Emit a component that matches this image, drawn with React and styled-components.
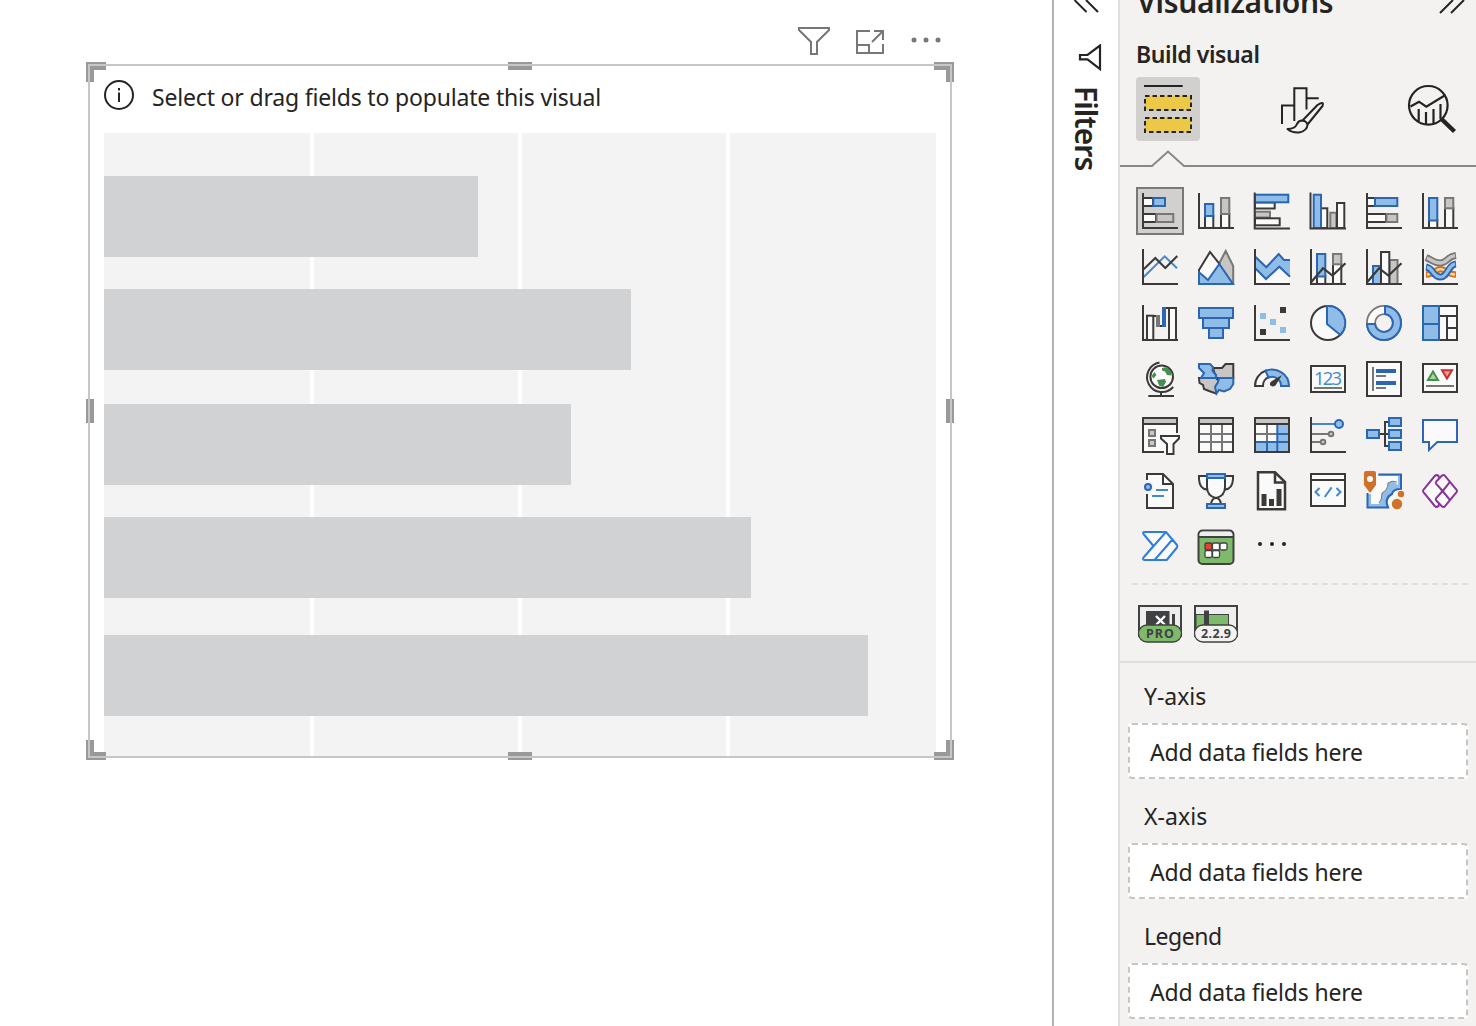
import React from 'react';
import styled, { createGlobalStyle } from 'styled-components';

const INK = '#252423';
const DARK = '#3b3a39';
const GRAY = '#797775';
const LGRAY = '#c8c6c4';
const BLUE = '#2b66b1';
const SKY = '#90bce8';
const MID = '#4389cb';
const PAPER = '#fafafa';

const GlobalStyle = createGlobalStyle`
  body { margin: 0; background: #fff; }
  * { box-sizing: border-box; }
  svg { display: block; flex: none; }
`;

const Shell = styled.div`
  display: flex;
  width: 1476px;
  height: 1026px;
  overflow: hidden;
  background: #fff;
  color: ${INK};
  font-family: "Noto Sans", "Open Sans", sans-serif;
`;

const Canvas = styled.main`
  width: 1052px;
  padding: 20px 100px 0 86px;
`;

const VisualHeader = styled.div`
  display: flex;
  justify-content: flex-end;
  gap: 16px;
  height: 42px;
  padding-right: 6px;
`;

const Visual = styled.section`
  position: relative;
  width: 868px;
  height: 698px;
  padding: 4px 18px;
`;

const SelectionFrame = styled.div`
  position: absolute;
  inset: 2px;
  border: 2px solid #c6c6c6;
  pointer-events: none;
`;

const Handle = styled.span`
  position: absolute;
  background: #999;
  ${(p) => p.$css}
`;

const Hint = styled.div`
  display: flex;
  align-items: center;
  gap: 18px;
  height: 67px;
  padding-bottom: 9px;
  font-size: 23px;
  letter-spacing: -0.18px;
  white-space: nowrap;

  span { padding-top: 4px; }
`;

const Plot = styled.div`
  display: flex;
  flex-direction: column;
  width: 832px;
  height: 623px;
  padding-top: 43px;
  background:
    linear-gradient(#fff, #fff) 206px 0 / 4px 100% no-repeat,
    linear-gradient(#fff, #fff) 414px 0 / 4px 100% no-repeat,
    linear-gradient(#fff, #fff) 622px 0 / 4px 100% no-repeat,
    #f3f3f3;
`;

const Bar = styled.div`
  width: ${(p) => p.$w}px;
  height: 81px;
  margin-bottom: ${(p) => p.$gap}px;
  flex: none;
  background: #d1d2d4;
`;

const FiltersPane = styled.aside`
  display: flex;
  flex-direction: column;
  align-items: center;
  width: 66px;
  border-left: 2px solid #b3b2ad;
`;

const FiltersTitle = styled.div`
  writing-mode: vertical-rl;
  margin-top: 14px;
  font-size: 30px;
  font-weight: 600;
  line-height: 40px;
  letter-spacing: -0.9px;
`;

const VizPane = styled.aside`
  width: 358px;
  border-left: 2px solid #e1dfdd;
  background: #f3f2f1;
`;

const PaneHeader = styled.header`
  display: flex;
  justify-content: space-between;
  height: 32px;
  padding: 0 10px 0 17px;
`;

const PaneTitle = styled.h1`
  margin: -18px 0 0;
  font-size: 30px;
  font-weight: 600;
  line-height: 40px;
  letter-spacing: -0.35px;
`;

const SubTitle = styled.h2`
  height: 45px;
  margin: 0;
  padding-left: 16px;
  font-size: 23px;
  font-weight: 600;
  line-height: 45px;
  letter-spacing: -0.4px;
`;

const Tabs = styled.nav`
  display: flex;
  justify-content: space-between;
  padding: 0 12px 0 16px;
`;

const Tab = styled.button`
  width: 64px;
  height: 64px;
  padding: 0;
  border: 0;
  border-radius: 4px;
  background: ${(p) => (p.$active ? '#d2d0ce' : 'transparent')};
`;

const Gallery = styled.div`
  display: grid;
  grid-template-columns: repeat(6, 48px);
  grid-auto-rows: 48px;
  gap: 8px;
  padding: 20px 0 12px 16px;
`;

const Tile = styled.button`
  width: 48px;
  height: 48px;
  padding: 0;
  border: 0;
  background: ${(p) => (p.$active ? '#d2d0ce' : 'transparent')};
  box-shadow: ${(p) => (p.$active ? 'inset 0 0 0 2px #7a7876' : 'none')};
`;

const DashRule = styled.div`
  height: 2px;
  margin: 0 8px 0 12px;
  background: repeating-linear-gradient(90deg, #e1dfdd 0 6px, transparent 6px 10px);
`;

const CustomRow = styled.div`
  display: flex;
  gap: 8px;
  height: 78px;
  padding: 15px 0 0 16px;
  border-bottom: 2px solid #e1dfdd;
`;

const Well = styled.div`
  height: 120px;
  padding: 0 8px;
`;

const WellLabel = styled.div`
  height: 60px;
  padding-left: 16px;
  font-size: 23px;
  line-height: 67px;
  letter-spacing: ${(p) => p.$spacing}px;
`;

const DropZone = styled.div`
  width: 340px;
  height: 56px;
  padding-left: 20px;
  border: 2px dashed #c8c6c4;
  border-radius: 4px;
  background: #fff;
  font-size: 23px;
  line-height: 55px;
  letter-spacing: -0.17px;
`;

const R = ({ a, s = DARK, f = PAPER, w = 2 }) => (
  <rect x={a[0]} y={a[1]} width={a[2] - a[0]} height={a[3] - a[1]} stroke={s} fill={f} strokeWidth={w} />
);
const P = ({ d, s = DARK, f = 'none', w = 2, ...rest }) => (
  <path d={d} stroke={s} fill={f} strokeWidth={w} {...rest} />
);
const Axis = () => <P d="M7 6V41H42" />;
const Blue = ({ a }) => <R a={a} s={BLUE} f={SKY} />;
const Gray = ({ a }) => <R a={a} s={GRAY} f={LGRAY} />;

const Trend = () => <P d="M7.3 39L19 25.2L28.5 32.6L41.5 20.3" w={2.2} />;

const icons = [
  ['Stacked bar chart', <><R a={[7, 11, 17, 19]} /><Blue a={[17.3, 11, 29, 19]} /><R a={[7, 27, 20, 35]} /><Gray a={[20.5, 27, 37.3, 35]} /><Axis /></>],
  ['Stacked column chart', <><R a={[13, 29, 21.3, 41]} /><Blue a={[13, 17, 21.3, 29]} /><R a={[29, 27, 37.3, 41]} /><Gray a={[29, 11, 37.3, 27]} /><Axis /></>],
  ['Clustered bar chart', <><R a={[7, 15.5, 26.7, 21.5]} /><Blue a={[7, 7.7, 40.3, 15.3]} /><Gray a={[7, 24.7, 22, 30.5]} /><R a={[7, 31.3, 31.7, 38.3]} /><P d="M6.7 5.5V41.5H42" /></>],
  ['Clustered column chart', <><R a={[17, 21.3, 23.3, 41]} /><Blue a={[9.7, 7.7, 17, 41]} /><Gray a={[26.3, 25.7, 32.3, 41]} /><R a={[33, 16, 40.3, 41]} /><P d="M6.5 5.5V41.5H42" /></>],
  ['100% stacked bar chart', <><R a={[7, 11, 15, 19]} /><Blue a={[15, 11, 37.3, 19]} /><R a={[7, 27, 26, 35]} /><Gray a={[26.5, 27, 37.3, 35]} /><Axis /></>],
  ['100% stacked column chart', <><R a={[13, 33, 21.3, 41]} /><Blue a={[13, 11, 21.3, 33.5]} /><R a={[29, 21, 37.3, 41]} /><Gray a={[29, 11, 37.3, 21.3]} /><Axis /></>],

  ['Line chart', <><P d="M7.7 34L28.7 13.3L41 25.3" s={MID} /><P d="M7.7 26.3L19.3 15L29.3 25L41.3 13" /><Axis /></>],
  ['Area chart', <><P d="M27.3 20.3L33.7 8L41.2 23V41H27Z" s={GRAY} f={LGRAY} /><P d="M7 41V27L18 9L27.5 21L20 41Z" f={PAPER} /><P d="M7 29.3L16 37L27.3 21L41 41H7Z" s={BLUE} f={SKY} /></>],
  ['Stacked area chart', <><path d="M7.3 26L18 36L31.3 24L42 33.7V41H7Z" fill={PAPER} /><path d="M7.3 13.7L18.3 24.3L30.7 11L36 17H42V33.7L31.3 23.7L18 36L7.3 25.3Z" fill={SKY} /><P d="M7.3 13.7L18.3 24.3L30.7 11L36 17H42M42 33.7L31.3 23.7L18 36L7.3 25.3" s={BLUE} /><Axis /></>],
  ['Line and stacked column chart', <><R a={[13, 33, 21.3, 41]} /><Blue a={[13, 11, 21.3, 33.5]} /><R a={[29, 21, 37.3, 41]} /><Gray a={[29, 11, 37.3, 21.3]} /><Axis /><Trend /></>],
  ['Line and clustered column chart', <><Blue a={[13, 23, 21, 41]} /><Gray a={[29.5, 17, 37.5, 41]} /><R a={[21, 9, 29.3, 41]} /><Axis /><Trend /></>],
  ['Ribbon chart', <>
    <P d="M10 31.5C18 31.5 20 26 24.5 26S32 31.5 40 31.5" s="#d4701f" w={6.5} /><P d="M11 31.5C18 31.5 20 26 24.5 26S32 31.5 39 31.5" s="#fbd58b" w={2.6} />
    <P d="M10 14.5C17 17.5 18 20 24 20C31 20 31 13.5 40 12.5" s={GRAY} w={7} /><P d="M11 15C17 17.5 18 20 24 20C31 20 31 13.5 39 12.6" s={LGRAY} w={3.4} />
    <P d="M10 24C17 25 17 34 24.5 34C32 34 32 21.5 40 21" s={BLUE} w={7} /><P d="M11 24.2C17 25 17 34 24.5 34C32 34 32 21.5 39 21.1" s={SKY} w={3.2} /><Axis /></>],

  ['Waterfall chart', <><R a={[11, 16.7, 17.3, 41]} /><P d="M17 17H22M22 27H28" /><rect x="20" y="16" width="4" height="12" fill={GRAY} /><R a={[33, 9, 40, 41]} /><P d="M29 9H34" /><rect x="26" y="8" width="4" height="20" fill={BLUE} /><Axis /></>],
  ['Funnel', <><Blue a={[7, 9, 41, 19]} /><Blue a={[11, 19, 37, 29]} /><Blue a={[17, 29, 31, 39]} /></>],
  ['Scatter chart', <><g fill={SKY}><rect x="12" y="14" width="6" height="6" /><rect x="22" y="20" width="6" height="6" /><rect x="32" y="28" width="6" height="6" /></g><rect x="32" y="8" width="6" height="6" fill={DARK} /><rect x="12" y="30" width="6" height="6" fill={DARK} /><Axis /></>],
  ['Pie chart', <><circle cx="24" cy="24" r="17" fill={PAPER} stroke={DARK} strokeWidth="2" /><P d="M23 7A17 17 0 0 1 36.3 36L23 25Z" s={BLUE} f={SKY} /></>],
  ['Donut chart', <><circle cx="24" cy="24" r="13" stroke={GRAY} strokeWidth="10" fill="none" /><circle cx="24" cy="24" r="13" stroke={PAPER} strokeWidth="6.4" fill="none" /><P d="M25 7A17 17 0 1 1 7 25H15A9 9 0 1 0 25 15Z" s={BLUE} f={SKY} /></>],
  ['Treemap', <><R a={[23, 7, 41, 41]} /><P d="M23 17H41M31 17V41M31 29H41" /><Blue a={[7, 7, 23, 25]} /><Blue a={[7, 25, 23, 41]} /></>],

  ['Map', <><circle cx="25.7" cy="21.7" r="11.3" fill={PAPER} stroke={DARK} strokeWidth="2" /><path d="M26 13L31 12L35.5 17L35 20.5L31 20L29 16.5L26 15.5ZM21 25L29 24L30 27L27 32L23 30.5ZM15.5 21L18.5 17L20.5 20L17.5 23.5Z" fill="#46904f" /><P d="M23.5 7.5A14.9 14.9 0 1 0 37.2 32M25 36.5V41M12.3 41H38" /></>],
  ['Filled map', <><P d="M21 13H30L33.5 9H41.3V23H24Z" s={DARK} f={LGRAY} /><P d="M7 23H24L29 28L25 33L24 38.5L17 36L12 34L11 30L7.5 28Z" s={DARK} f={LGRAY} /><P d="M7 9H18L21 12L20.5 16L24 20V23H9L12 18L7 13Z" s={BLUE} f={SKY} /><P d="M27 23H41.3V29L38 34L32 36.5L27 35L24.5 38.5L23 32L26 27Z" s={BLUE} f={SKY} /></>],
  ['Gauge', <><path d="M7 31A17 16.3 0 0 1 18 15.5L21 22A9 9 0 0 0 15 31Z" fill={PAPER} stroke={DARK} strokeWidth="2" /><P d="M17.5 15.8A17 16.3 0 0 1 41 31H33A9 9 0 0 0 20.5 22.5Z" s={BLUE} f={SKY} /><path d="M34 20L27.5 30.5Q24 32.5 22 30Q21.5 27 24 26Z" fill={DARK} /></>],
  ['Card', <><R a={[7, 11, 41, 37]} /><text x="24" y="30" textAnchor="middle" fontSize="18.5" fontFamily="Open Sans, Noto Sans, sans-serif" textLength="28" fill={MID}>123</text><P d="M10 33H38" s={GRAY} /></>],
  ['Multi-row card', <><R a={[7, 7, 41, 41]} /><P d="M13 12V36M16 21H26M16 33H26" s={GRAY} /><P d="M16 16H36M16 28H36" s={BLUE} w={4} /></>],
  ['KPI', <><R a={[7, 9, 41, 37]} /><P d="M17 16.5L22 25H12Z" s="#46904f" f="#a5d6a0" /><P d="M26 15.3H36L31 23.5Z" s="#c4302b" f="#f19a98" /><P d="M10 31H38" s={GRAY} /></>],

  ['Slicer', <><path d="M7 12H41V22L28 41H7Z" fill={PAPER} /><R a={[7, 7, 41, 13]} f={LGRAY} /><P d="M41 12V22M7 12V41H28" /><Gray a={[13, 19, 19, 25]} /><Gray a={[13, 29, 19, 35]} /><P d="M25 25H43V27.5L37.5 33V43H31V33L25 27.5Z" f={PAPER} /></>],
  ['Table', <><R a={[7, 7, 41, 41]} /><P d="M19 13V41M30 13V41M7 23H41M7 31H41" s={GRAY} /><R a={[7, 7, 41, 41]} f="none" /><R a={[7, 7, 41, 13]} f={LGRAY} /></>],
  ['Matrix', <><R a={[7, 7, 41, 41]} /><path d="M29 13H41V41H7V31H29Z" fill={SKY} /><P d="M19 13V31M7 23H29" s={GRAY} /><P d="M29.3 13V41M19 31V41M7 31H41M29 23H41" s={BLUE} /><R a={[7, 7, 41, 41]} f="none" /><R a={[7, 7, 41, 13]} f={LGRAY} /></>],
  ['Key influencers', <><P d="M8 13H31" s={MID} /><circle cx="35" cy="13" r="4" fill={SKY} stroke={BLUE} strokeWidth="2" /><P d="M8 23H25M8 31H17" s={GRAY} /><circle cx="27" cy="23" r="2.3" fill={LGRAY} stroke={GRAY} strokeWidth="2" /><circle cx="19" cy="31" r="2.3" fill={LGRAY} stroke={GRAY} strokeWidth="2" /><Axis /></>],
  ['Decomposition tree', <><P d="M19 23H29M29 11H25V35H29" /><Blue a={[7, 19, 19, 27]} /><Blue a={[29, 7, 41, 15]} /><Blue a={[29, 19, 41, 27]} /><Blue a={[29, 31, 41, 39]} /></>],
  ['Q&A', <P d="M7 9H41V31H21.3L13 39V31H7Z" s={BLUE} f={PAPER} />],

  ['Smart narrative', <><P d="M11 27V41H37V17L27 7H11V13" f={PAPER} /><path d="M11 14V26" stroke={PAPER} strokeWidth="3" /><P d="M27 7V17H37" /><P d="M20 23H32M16 29H28" s={MID} /><circle cx="12" cy="20" r="6" fill="#f3f2f1" /><circle cx="12" cy="20" r="3" fill={SKY} stroke={BLUE} strokeWidth="2" /></>],
  ['Goals', <><P d="M15 9H7V12Q7.5 22 15 22.5M33 9H41V12Q40.5 22 33 22.5" f={PAPER} /><P d="M15 10V20Q15 29 24 31Q33 29 33 20V10Z" f={PAPER} /><P d="M19 37Q20 31 24 31Q28 31 29 37" f={PAPER} /><Blue a={[15, 7, 33, 11]} /><Blue a={[15, 37, 33, 41]} /></>],
  ['Paginated report', <><P d="M10 5.3H27L37 15V42.3H10Z" f={PAPER} w={2.5} /><P d="M27 5.5V15.5H37" w={2.5} /><path d="M13.5 27H18.5V39H13.5ZM21 32H26V39H21ZM28.5 22H33.5V39H28.5Z" fill={DARK} /></>],
  ['Script visual', <><R a={[7, 7, 41, 39]} /><P d="M7 13H41" /><P d="M15.5 21L11.5 25L15.5 29M27.7 20.3L20.7 30M32.5 21L36.5 25L32.5 29" s={MID} /></>],
  ['ArcGIS map', <>
    <path d="M7 7H41V22L27 41H7Z" fill={PAPER} /><path d="M18 7H41V20H38V9H18Z" fill={SKY} /><path d="M8 27V40H27Q25 33 30 29Q33 23 41 22L36 16Q32 13 28 16Q28 23 22 26Q22 33 19 37H11V27Z" fill={SKY} />
    <P d="M18.5 7.5H41V22Q33 22 32 27Q24 31 28 40.5H7.5V26" s={BLUE} />
    <path d="M37 15Q32 13 28 16Q28 23 22 26Q22 33 19 36" fill="none" stroke={GRAY} strokeWidth="1" />
    <path d="M4 6Q4 4 6 4H14Q16 4 16 6V18L10 26L4 18Z" fill="#cf7128" /><circle cx="10" cy="12" r="3" fill="#fafafa" />
    <circle cx="37" cy="37" r="7" fill="#f3f2f1" /><circle cx="41" cy="27" r="4.2" fill="#f3f2f1" /><circle cx="37" cy="37" r="5.2" fill="#cf7128" /><circle cx="41" cy="27" r="3.2" fill="#cf7128" /></>],
  ['Power Apps', <g strokeLinejoin="round">
    <P d="M7.4 22.8L18.8 9Q20.3 7.3 22.5 8.8L26 24L22.5 39.2Q20.3 40.7 18.8 39L7.4 25.2Q6.5 24 7.4 22.8Z" s="#8a3398" f={PAPER} />
    <P d="M25.8 8.7Q27.4 7.3 29 8.8L40.6 22.8Q41.5 24 40.6 25.2L29 39.2Q27.4 40.7 25.8 39.3L20.2 33.5Q19.3 32.3 20.2 31.2L26.7 24L20.2 16.8Q19.3 15.7 20.2 14.5Z" s="#8a3398" f={PAPER} />
    <P d="M26.7 24L33.8 15.2M26.7 24L33.8 32.8" s="#8a3398" /></g>],

  ['Power Automate', <P d="M8 9H30L41 22Q41.7 23.3 41 24.5L30.7 37H8Q6.3 36 7.5 34.5L17.5 23L7.5 11Q6.5 9.7 8 9ZM30 9L7.5 34.5M36.5 16.5L18.5 37" s="#2f7de0" f={PAPER} strokeLinejoin="round" />],
  ['Calendar visual', <><rect x="6.5" y="7.5" width="35" height="33.5" rx="4" fill="#7fba6b" stroke="#3f4142" strokeWidth="2" /><path d="M7.5 13V11Q8 8.5 11 8.5H37Q40.5 8.5 40.5 13Z" fill="#eee" /><P d="M7 14H41" s="#3f4142" /><g fill="#fff" stroke="#3f4142" strokeWidth="1.3"><rect x="13" y="20" width="7" height="7" rx="1.5" fill="#e34234" /><rect x="20.5" y="20" width="7" height="7" rx="1.5" /><rect x="28" y="20" width="7" height="7" rx="1.5" /><rect x="13" y="27.5" width="7" height="7" rx="1.5" /><rect x="20.5" y="27.5" width="7" height="7" rx="1.5" /></g></>],
  ['More visuals', <g fill={INK}><circle cx="12" cy="21" r="2" /><circle cx="24" cy="21" r="2" /><circle cx="36" cy="21" r="2" /></g>],
];

const bars = [
  [374, 32],
  [527, 33.5],
  [467, 32],
  [647, 37.5],
  [764, 0],
];

const handles = [
  'left:0;top:0;width:20px;height:8px', 'left:0;top:0;width:8px;height:20px',
  'right:0;top:0;width:20px;height:8px', 'right:0;top:0;width:8px;height:20px',
  'left:0;bottom:0;width:20px;height:8px', 'left:0;bottom:0;width:8px;height:20px',
  'right:0;bottom:0;width:20px;height:8px', 'right:0;bottom:0;width:8px;height:20px',
  'left:422px;top:0;width:24px;height:8px', 'left:422px;bottom:0;width:24px;height:8px',
  'left:0;top:337px;width:8px;height:24px', 'right:0;top:337px;width:8px;height:24px',
];

const wells = [
  ['Y-axis', -0.05],
  ['X-axis', 0.05],
  ['Legend', -0.45],
];

const BadgeLabel = ({ children, width }) => (
  <text x="24" y="38" textAnchor="middle" fontFamily="Noto Sans, sans-serif" fontWeight="700" fontSize="12.5" textLength={width} fill="#3f4142">{children}</text>
);

export default function App() {
  return (
    <Shell>
      <GlobalStyle />
      <Canvas>
        <VisualHeader>
          <svg width="40" height="42" fill="none" stroke="#797775" strokeWidth="2"><path d="M5 8H35V10L23 22V34H17V22L5 10Z" /></svg>
          <svg width="40" height="42" fill="none" stroke="#797775" strokeWidth="2"><path d="M20 11H7V33H33V24M7 25H19V33M24 11H33V20M33 11L22 22" /></svg>
          <svg width="40" height="42" fill="#797775"><circle cx="8" cy="20" r="2.5" /><circle cx="20" cy="20" r="2.5" /><circle cx="32" cy="20" r="2.5" /></svg>
        </VisualHeader>
        <Visual>
          <Hint>
            <svg width="30" height="30"><circle cx="15" cy="15" r="14" fill="none" stroke={INK} strokeWidth="2" /><path d="M15 12.5V22M15 8V10.5" stroke={INK} strokeWidth="2" /></svg>
            <span>Select or drag fields to populate this visual</span>
          </Hint>
          <Plot>{bars.map(([w, gap]) => <Bar key={w} $w={w} $gap={gap} />)}</Plot>
          {handles.map((h) => <Handle key={h} $css={h} />)}
          <SelectionFrame />
        </Visual>
      </Canvas>
      <FiltersPane>
        <svg width="64" height="44" fill="none" stroke={INK} strokeWidth="2"><path d="M32.5 12L20.5 0M44 12L32 0" /></svg>
        <svg width="64" height="28" fill="none" stroke={INK} strokeWidth="2.2"><path d="M46 1.5V25L33.5 15.3H26V11H33.5Z" /></svg>
        <FiltersTitle>Filters</FiltersTitle>
      </FiltersPane>
      <VizPane>
        <PaneHeader>
          <PaneTitle>Visualizations</PaneTitle>
          <svg width="28" height="16" fill="none" stroke={INK} strokeWidth="2"><path d="M2 13L15 0M13 13L26 0" /></svg>
        </PaneHeader>
        <SubTitle>Build visual</SubTitle>
        <Tabs>
          <Tab $active aria-label="Fields">
            <svg width="64" height="64"><path d="M8 9H46.7" stroke={INK} strokeWidth="2" /><g fill="#ebc846" stroke={INK} strokeWidth="2" strokeDasharray="4.5 3"><rect x="9" y="19" width="46" height="14" /><rect x="9" y="41" width="46" height="14" /></g></svg>
          </Tab>
          <Tab aria-label="Format">
            <svg width="64" height="64" fill="none" stroke={INK} strokeWidth="2"><path d="M14 47V28.5H26M26.3 44V11.3H38.5V32.5M38.5 21.3H50.7" /><path d="M19.5 52Q27 52 29 47Q30.5 43.5 34 43.5Q39 44 39.5 48Q39 54 31 55.5Q24 56 19.5 52ZM34.5 43.5L49.5 28Q56.5 23.5 54.5 29L39.5 47.5" strokeLinejoin="round" /></svg>
          </Tab>
          <Tab aria-label="Analytics">
            <svg width="64" height="64" fill="none" stroke={INK} strokeWidth="2.2"><circle cx="28.3" cy="28.3" r="19.3" /><path d="M10.5 29.5L19 24.7L26.3 29.7L45.5 18M18.7 32V44.5M26 35V47M33.5 32V46.5M40.5 27V42" /><path d="M41.5 42L54.5 54.5" strokeWidth="4.5" /></svg>
          </Tab>
        </Tabs>
        <svg width="356" height="26" fill="none" stroke="#8a8886" strokeWidth="2"><path d="M0 25H32L48 10.5L64 25H356" /></svg>
        <Gallery>
          {icons.map(([name, art], i) => (
            <Tile key={name} $active={i === 0} aria-label={name}><svg width="48" height="48">{art}</svg></Tile>
          ))}
        </Gallery>
        <DashRule />
        <CustomRow>
          <svg width="48" height="48">
            <rect x="3" y="6" width="42" height="30" fill="#eee" stroke="#3f4142" strokeWidth="2" /><path d="M10 11H33.5V28H10ZM36 14H39V28H36Z" fill="#3f4142" /><path d="M20 16L29 25M29 16L20 25" stroke="#fff" strokeWidth="2.4" />
            <rect x="2.5" y="25" width="43" height="17" rx="8.5" fill="#7fba6b" stroke="#3f4142" strokeWidth="1.3" /><BadgeLabel width={28}>PRO</BadgeLabel>
          </svg>
          <svg width="48" height="48">
            <rect x="3" y="6" width="42" height="30" fill="#eee" stroke="#3f4142" strokeWidth="2" /><rect x="4" y="14.5" width="32.5" height="14" fill="#7fba6b" stroke="#3f4142" strokeWidth="1" /><path d="M12 10.5H17V28H12Z" fill="#3f4142" />
            <rect x="2.5" y="25" width="43" height="17" rx="8.5" fill="#f3f2f1" stroke="#3f4142" strokeWidth="1.3" /><BadgeLabel width={30}>2.2.9</BadgeLabel>
          </svg>
        </CustomRow>
        {wells.map(([label, spacing]) => (
          <Well key={label}>
            <WellLabel $spacing={spacing}>{label}</WellLabel>
            <DropZone>Add data fields here</DropZone>
          </Well>
        ))}
      </VizPane>
    </Shell>
  );
}
